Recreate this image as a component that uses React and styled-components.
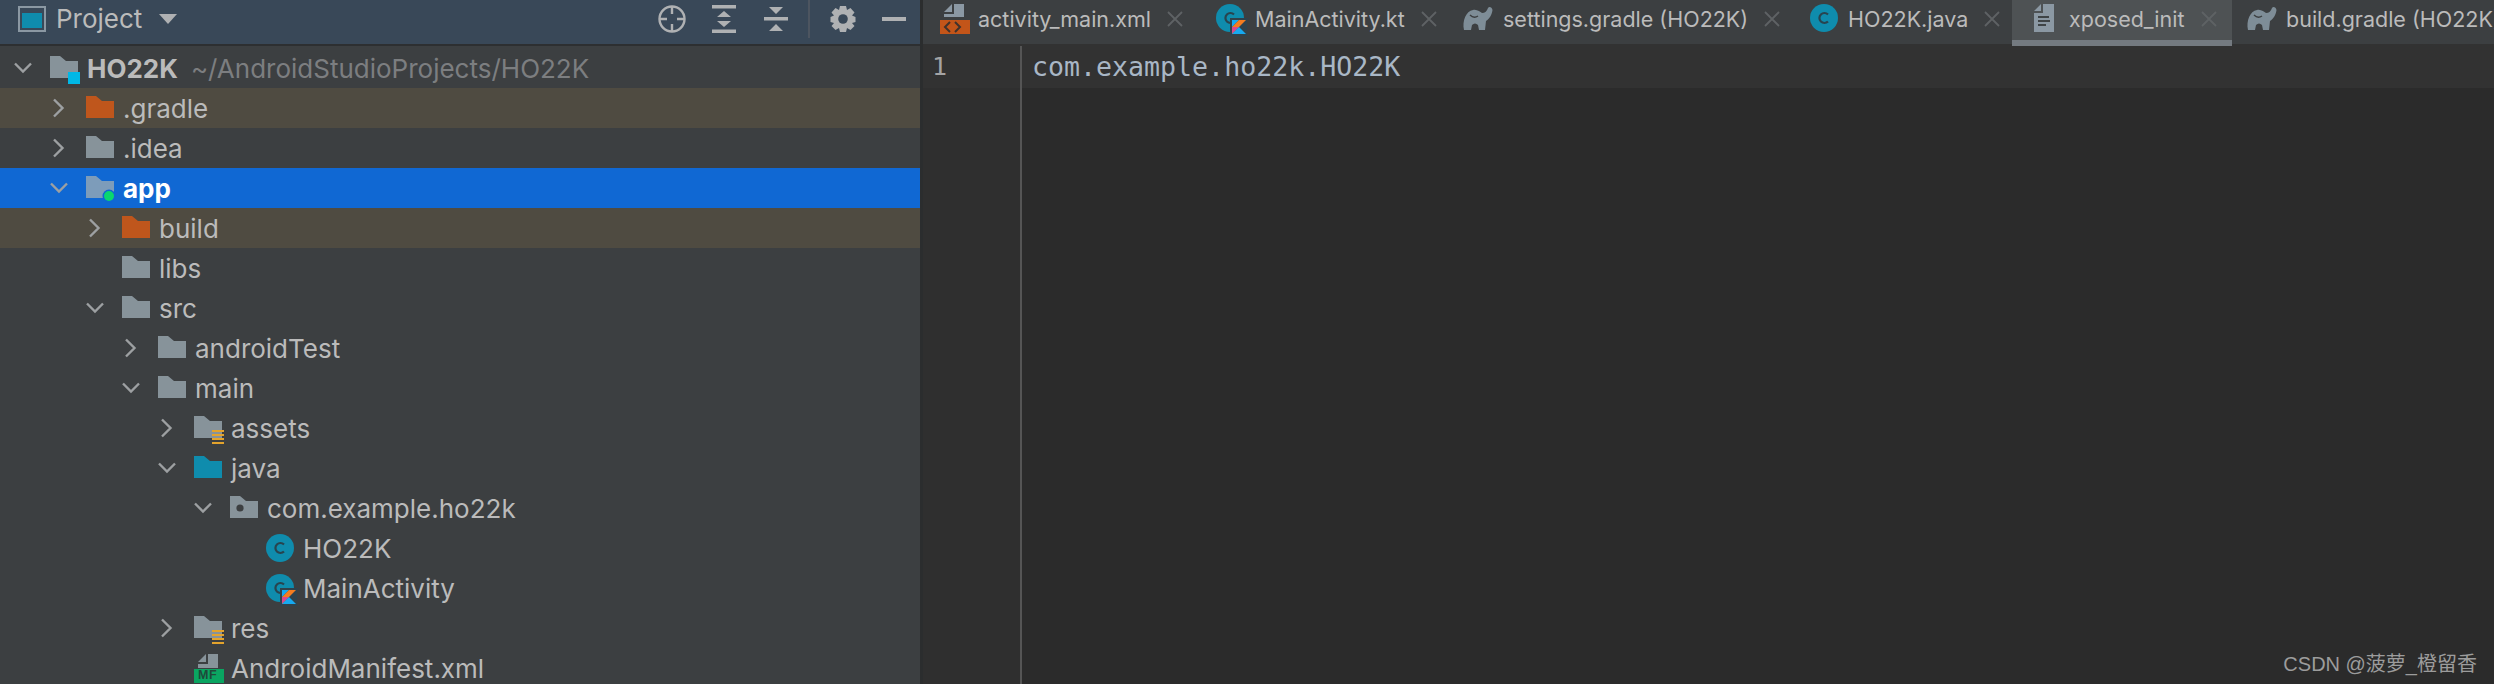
import React from "react";
import styled, { createGlobalStyle } from "styled-components";

const Global = createGlobalStyle`
  html, body { margin: 0; padding: 0; background: #2b2b2b; }
  #root { width: 2494px; height: 684px; overflow: hidden; }
`;

const Shell = styled.div`
  display: grid;
  grid-template-columns: 920px 3px 1fr;
  width: 2494px;
  height: 684px;
  overflow: hidden;
  font-family: Inter, "Noto Sans", sans-serif;
`;
const Side = styled.aside`
  display: flex;
  flex-direction: column;
  background: #3c3f41;
  min-width: 0;
  overflow: hidden;
`;
const Split = styled.div`
  background: #2b2d2e;
`;
const SideHeader = styled.header`
  flex: 0 0 46px;
  box-sizing: border-box;
  display: flex;
  align-items: center;
  background: #394858;
  padding: 0 0 6px 18px;
  border-bottom: 2px solid #2d2f31;
`;
const HeaderTitle = styled.span`
  margin-left: 10px;
  font-size: 26px;
  line-height: 30px;
  color: #bbbbbb;
`;
const Caret = styled.span`
  margin-left: 17px;
  width: 0;
  height: 0;
  border-left: 9px solid transparent;
  border-right: 9px solid transparent;
  border-top: 10px solid #afb1b3;
`;
const HeaderTools = styled.div`
  margin-left: auto;
  display: flex;
  align-items: center;
  height: 100%;
`;
const ToolSep = styled.span`
  width: 2px;
  height: 38px;
  background: #4d5560;
  margin: 0 20px 0 20px;
`;
const Tree = styled.div`
  display: flex;
  flex-direction: column;
`;
const Row = styled.div`
  flex: 0 0 auto;
  box-sizing: border-box;
  height: ${(p) => (p.$root ? 42 : 40)}px;
  padding-top: ${(p) => (p.$root ? 1 : 0)}px;
  display: flex;
  align-items: center;
  padding-left: ${(p) => 14 + p.$level * 36}px;
  background: ${(p) => (p.$selected ? "#1068d3" : p.$ignored ? "#4f4b41" : "transparent")};
`;
const ChevronSlot = styled.span`
  flex: 0 0 36px;
  height: 18px;
  display: flex;
  align-items: center;
`;
const IconSlot = styled.span`
  flex: 0 0 37px;
  height: 30px;
  display: flex;
  align-items: center;
`;
const Label = styled.span`
  font-size: 26px;
  line-height: 40px;
  padding-top: 2px;
  white-space: nowrap;
  color: ${(p) => (p.$selected ? "#ffffff" : "#bbbbbb")};
  font-weight: ${(p) => (p.$bold ? 700 : 400)};
`;
const Path = styled.span`
  margin-left: 13px;
  padding-top: 2px;
  font-size: 26px;
  white-space: nowrap;
  color: #7c7e80;
`;
const Main = styled.main`
  display: flex;
  flex-direction: column;
  min-width: 0;
  position: relative;
  background: #2b2b2b;
`;
const Tabs = styled.nav`
  flex: 0 0 46px;
  display: flex;
  background: #3c3f41;
  overflow: hidden;
  padding-left: 17px;
  box-shadow: inset 0 -2px 0 #323232;
`;
const Tab = styled.div`
  flex: 0 0 auto;
  width: ${(p) => p.$w}px;
  height: 46px;
  box-sizing: border-box;
  display: flex;
  padding-top: 4px;
  padding-left: ${(p) => p.$pad || 0}px;
  background: ${(p) => (p.$active ? "#4e5254" : "transparent")};
  border-bottom: ${(p) => (p.$active ? "6px solid #747a80" : "0")};
  color: #bbbbbb;
`;
const TabIcon = styled.span`
  flex: 0 0 ${(p) => p.$w}px;
  height: 32px;
  display: flex;
  align-items: flex-start;
`;
const TabLabel = styled.span`
  font-size: 21.5px;
  line-height: 30px;
  white-space: nowrap;
`;
const TabClose = styled.span`
  margin-left: 16px;
  margin-top: 7px;
  width: 16px;
  height: 16px;
  flex: 0 0 16px;
  display: flex;
`;
const Editor = styled.section`
  flex: 1;
  display: grid;
  grid-template-columns: 97px 2px 1fr;
  grid-template-rows: 42px 1fr;
  background: #2b2b2b;
`;
const LineNo = styled.div`
  background: #323232;
  color: #a4a4a4;
  font-family: "DejaVu Sans Mono", "Liberation Mono", monospace;
  font-size: 25px;
  line-height: 42px;
  padding-left: 9px;
`;
const GutterRule = styled.div`
  grid-row: 1 / span 2;
  grid-column: 2;
  background: #555555;
`;
const CodeLine = styled.div`
  background: #323232;
  color: #a9b7c6;
  font-family: "DejaVu Sans Mono", "Liberation Mono", monospace;
  font-size: 26.6px;
  line-height: 42px;
  padding-left: 10px;
  white-space: pre;
`;
const GutterRest = styled.div`
  grid-column: 1;
  grid-row: 2;
  background: #2f2f2f;
`;
const Watermark = styled.div`
  position: absolute;
  right: 17px;
  bottom: 7px;
  font-family: "Liberation Sans", "Noto Sans CJK SC", sans-serif;
  font-size: 20px;
  line-height: 26px;
  color: #9c9c9c;
`;
const ManifestBadge = styled.span`
  position: absolute;
  left: 4px;
  top: 15px;
  font: 700 12.5px/15px "Liberation Sans", sans-serif;
  letter-spacing: 0.5px;
  color: #1f4a3a;
`;
const ManifestWrap = styled.span`
  position: relative;
  display: block;
`;
const ToolIcon = styled.span`
  display: block;
  width: ${(p) => p.$w}px;
  height: 28px;
  margin-left: ${(p) => p.$ml}px;
`;

const Svg = ({ w, h, children }) => (
  <svg width={w} height={h} viewBox={`0 0 ${w} ${h}`} style={{ display: "block", overflow: "visible" }}>
    {children}
  </svg>
);

const Chevron = ({ open }) => (
  <Svg w={18} h={18}>
    {open ? (
      <path d="M1 4.5 L9 12.5 L17 4.5" fill="none" stroke="#9da0a2" strokeWidth="2.4" />
    ) : (
      <path d="M4 0.5 L12.5 9 L4 17.5" fill="none" stroke="#9da0a2" strokeWidth="2.4" />
    )}
  </Svg>
);

const Folder = ({ color = "#87939a", children }) => (
  <Svg w={28} h={26}>
    <path d="M0 1 H10 L16 6 H28 V23 H0 Z" fill={color} />
    {children}
  </Svg>
);

const Lines = () => (
  <g fill="#e3a32c">
    <rect x="18" y="15" width="12" height="2" />
    <rect x="18" y="19" width="12" height="2" />
    <rect x="18" y="23" width="12" height="2" />
    <rect x="18" y="27" width="12" height="2" />
  </g>
);

const KotlinMark = ({ x, y }) => (
  <g transform={`translate(${x} ${y})`}>
    <path d="M-2 -2 H17 L15 0 L15 16 H-2 Z" fill="#30424c" />
    <path d="M0 0 H7 L0 7 Z" fill="#17a9f0" />
    <path d="M7 0 H14 L0 14 V7 Z" fill="#f57c1f" />
    <path d="M0 7 L7 7 L0 14 Z" fill="#d9488c" />
    <path d="M7 7 L14 14 H0 Z" fill="#17a9f0" />
  </g>
);

const ClassIcon = ({ kotlin }) => (
  <Svg w={28} h={28}>
    <circle cx="14" cy="14" r="14" fill="#0f8cad" />
    <path d="M18 10.5 A5 5 0 1 0 18 17.5" fill="none" stroke="#28444f" strokeWidth="2.2" />
    {kotlin && <KotlinMark x={16} y={16} />}
  </Svg>
);

const XmlIcon = () => (
  <Svg w={30} h={30}>
    <path d="M12 0 V8 H4 Z M14 0 H24 V13 H4 V10 H14 Z" fill="#8b98a3" />
    <rect x="0" y="16" width="30" height="14" fill="#c35519" />
    <path d="M10 18 L5 23 L10 28 M15 18 L20 23 L15 28" fill="none" stroke="#3f322c" strokeWidth="2" />
  </Svg>
);

const ManifestIcon = () => (
  <Svg w={30} h={30}>
    <path d="M12 1 V9 H4 Z M14 1 H24 V15 H4 V11 H14 Z" fill="#87939a" />
    <rect x="0" y="16" width="30" height="14" fill="#0aa561" />
  </Svg>
);

const TextFileIcon = () => (
  <Svg w={20} h={28}>
    <path d="M7 0 V7 H0 Z M9 0 H20 V28 H0 V9 H9 Z" fill="#8b98a3" />
    <g fill="#3f4446">
      <rect x="4" y="12" width="11" height="2" />
      <rect x="4" y="16" width="12" height="2" />
      <rect x="4" y="20" width="8" height="2" />
    </g>
  </Svg>
);

const Elephant = () => (
  <Svg w={30} h={30}>
    <g transform="translate(0 3)">
      <path
        d="M1 23 C-1 14 3 4 10 3 C14 2 17 5 19 6 C22 6 24 4 25 1 C26 -1 29 0 29.5 3 C29 8 26 12 23 14 L22 23 H16 L15 18 C13 16 11 16 9 18 L8 23 Z"
        fill="#7e8d97"
      />
      <path d="M7 8 C10 11 12 11 15 9" fill="none" stroke="#3c3f41" strokeWidth="1.4" />
    </g>
  </Svg>
);

const Close = () => (
  <Svg w={16} h={16}>
    <path d="M1 1 L15 15 M15 1 L1 15" stroke="#5e6264" strokeWidth="1.8" />
  </Svg>
);

const tools = {
  locate: (
    <Svg w={28} h={28}>
      <circle cx="14" cy="14" r="12.5" fill="none" stroke="#afb1b3" strokeWidth="2.4" />
      <path d="M14 1 V9 M14 19 V27 M1 14 H9 M19 14 H27" stroke="#afb1b3" strokeWidth="2.4" />
    </Svg>
  ),
  expand: (
    <Svg w={24} h={28}>
      <rect x="0" y="0" width="24" height="3.5" fill="#afb1b3" />
      <rect x="0" y="24.5" width="24" height="3.5" fill="#afb1b3" />
      <path d="M12 6 L19 12 H5 Z M12 22 L19 16 H5 Z" fill="#afb1b3" />
    </Svg>
  ),
  collapse: (
    <Svg w={24} h={28}>
      <rect x="0" y="12" width="24" height="3.5" fill="#afb1b3" />
      <path d="M5 2 H19 L12 9 Z M5 26 H19 L12 19 Z" fill="#afb1b3" />
    </Svg>
  ),
  gear: (
    <Svg w={26} h={28}>
      <g transform="translate(13 14)">
        <path
          d="M-3 -13 H3 L4 -9 L7.5 -11 L11.5 -6.5 L9 -3.5 L12.5 -2 V3 L9 4 L11.5 7 L7.5 11 L4 9 L3 13 H-3 L-4 9 L-7.5 11 L-11.5 7 L-9 4 L-12.5 3 V-2 L-9 -3.5 L-11.5 -6.5 L-7.5 -11 L-4 -9 Z"
          fill="#afb1b3"
        />
        <circle r="4.8" fill="#394858" />
      </g>
    </Svg>
  ),
  hide: (
    <Svg w={24} h={28}>
      <rect x="0" y="12" width="24" height="4" fill="#afb1b3" />
    </Svg>
  ),
};

const PanelIcon = () => (
  <Svg w={28} h={26}>
    <rect x="1" y="1" width="26" height="24" fill="none" stroke="#8b98a3" strokeWidth="2" />
    <rect x="4" y="7" width="20" height="15" fill="#0f8cad" />
  </Svg>
);

const ModuleIcon = () => (
  <Folder>
    <rect x="18" y="17" width="12" height="12" fill="#00b8e6" />
  </Folder>
);

const rows = [
  { level: 0, open: true, icon: "module", name: "HO22K", bold: true, path: "~/AndroidStudioProjects/HO22K", root: true },
  { level: 1, open: false, icon: "orange", name: ".gradle", ignored: true },
  { level: 1, open: false, icon: "folder", name: ".idea" },
  { level: 1, open: true, icon: "app", name: "app", bold: true, selected: true },
  { level: 2, open: false, icon: "orange", name: "build", ignored: true },
  { level: 2, icon: "folder", name: "libs" },
  { level: 2, open: true, icon: "folder", name: "src" },
  { level: 3, open: false, icon: "folder", name: "androidTest" },
  { level: 3, open: true, icon: "folder", name: "main" },
  { level: 4, open: false, icon: "res", name: "assets" },
  { level: 4, open: true, icon: "java", name: "java" },
  { level: 5, open: true, icon: "package", name: "com.example.ho22k" },
  { level: 6, icon: "class", name: "HO22K" },
  { level: 6, icon: "kt", name: "MainActivity" },
  { level: 4, open: false, icon: "res", name: "res" },
  { level: 4, icon: "manifest", name: "AndroidManifest.xml" },
];

const treeIcon = (k) => {
  switch (k) {
    case "module":
      return <ModuleIcon />;
    case "orange":
      return <Folder color="#bf561c" />;
    case "app":
      return (
        <Folder color="#7d9cba">
          <circle cx="23" cy="21" r="6.5" fill="#1068d3" />
          <circle cx="23" cy="21" r="5" fill="#0ad76f" />
        </Folder>
      );
    case "res":
      return (
        <Folder>
          <Lines />
        </Folder>
      );
    case "java":
      return <Folder color="#0f8cad" />;
    case "package":
      return (
        <Folder>
          <circle cx="10" cy="13" r="3.6" fill="#3c3f41" />
        </Folder>
      );
    case "class":
      return <ClassIcon />;
    case "kt":
      return <ClassIcon kotlin />;
    case "manifest":
      return (
        <ManifestWrap>
          <ManifestIcon />
          <ManifestBadge>MF</ManifestBadge>
        </ManifestWrap>
      );
    default:
      return <Folder />;
  }
};

const tabs = [
  { w: 276, iconW: 38, icon: <XmlIcon />, name: "activity_main.xml" },
  { w: 247, iconW: 39, icon: <ClassIcon kotlin />, name: "MainActivity.kt" },
  { w: 347, iconW: 40, icon: <Elephant />, name: "settings.gradle (HO22K)" },
  { w: 202, iconW: 38, icon: <ClassIcon />, name: "HO22K.java" },
  { w: 220, iconW: 35, pad: 22, icon: <TextFileIcon />, name: "xposed_init", active: true },
  { w: 330, iconW: 39, pad: 15, icon: <Elephant />, name: "build.gradle (HO22K)" },
];

export default function App() {
  return (
    <>
      <Global />
      <Shell>
        <Side>
          <SideHeader>
            <PanelIcon />
            <HeaderTitle>Project</HeaderTitle>
            <Caret />
            <HeaderTools>
              <ToolIcon $w={28} $ml={0}>{tools.locate}</ToolIcon>
              <ToolIcon $w={24} $ml={26}>{tools.expand}</ToolIcon>
              <ToolIcon $w={24} $ml={28}>{tools.collapse}</ToolIcon>
              <ToolSep />
              <ToolIcon $w={26} $ml={0}>{tools.gear}</ToolIcon>
              <ToolIcon $w={24} $ml={26}>{tools.hide}</ToolIcon>
              <ToolIcon $w={14} $ml={0} />
            </HeaderTools>
          </SideHeader>
          <Tree>
            {rows.map((r) => (
              <Row key={r.name + r.level} $level={r.level} $root={r.root} $selected={r.selected} $ignored={r.ignored}>
                <ChevronSlot>{r.open !== undefined && <Chevron open={r.open} />}</ChevronSlot>
                <IconSlot>{treeIcon(r.icon)}</IconSlot>
                <Label $bold={r.bold} $selected={r.selected}>{r.name}</Label>
                {r.path && <Path>{r.path}</Path>}
              </Row>
            ))}
          </Tree>
        </Side>
        <Split />
        <Main>
          <Tabs>
            {tabs.map((t) => (
              <Tab key={t.name} $w={t.w} $active={t.active} $pad={t.pad}>
                <TabIcon $w={t.iconW}>{t.icon}</TabIcon>
                <TabLabel>{t.name}</TabLabel>
                <TabClose><Close /></TabClose>
              </Tab>
            ))}
          </Tabs>
          <Editor>
            <LineNo>1</LineNo>
            <GutterRule />
            <CodeLine>com.example.ho22k.HO22K</CodeLine>
            <GutterRest />
          </Editor>
          <Watermark>CSDN @菠萝_橙留香</Watermark>
        </Main>
      </Shell>
    </>
  );
}
